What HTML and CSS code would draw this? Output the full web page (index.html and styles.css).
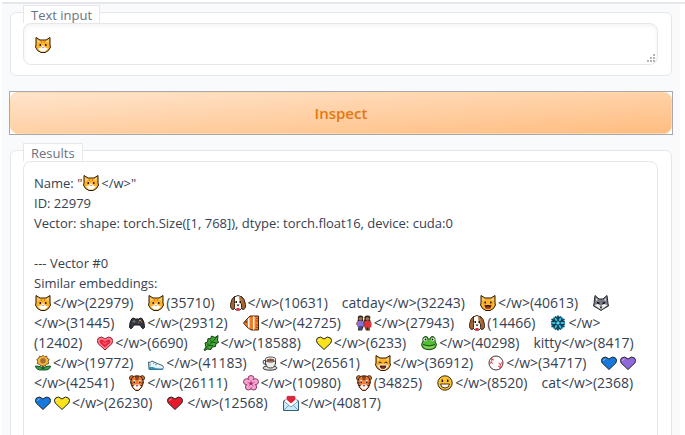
FILE: index.html
```html
<!DOCTYPE html>
<html lang="en">
<head>
<meta charset="utf-8">
<title>Embedding inspector</title>
<link rel="stylesheet" href="styles.css">
</head>
<body>
<svg class="sprite" aria-hidden="true">
  <symbol id="cat" viewBox="0 0 16 16"><path d="M1 .5 5 3h6L15 .5V8l.5 2-2 3.500L10 15.500H6L2.500 13.500.5 10 1 8z" fill="#fcb32b" stroke="#2a1a08"/><path d="M2.500 3v3L5 4.500zM13.500 3v3L11 4.500z" fill="#f8d9a0"/><path d="M6.500 3.500V6M9.500 3.500V6" stroke="#d9801a"/><path d="M8 8 6 10.500l-3 1L6 14.500h4l3-3-3-1z" fill="#fff"/><path d="M4.500 7H6v2H4.500zM10 7h1.500v2H10z" fill="#3a2410"/><path d="M7 10h2l-1 1.500z" fill="#e0566f"/></symbol>
  <symbol id="grin-cat" viewBox="0 0 16 16"><path d="M1 .5 5 3h6L15 .5V8l.5 2-2 3.500L10 15.500H6L2.500 13.500.5 10 1 8z" fill="#fcb32b" stroke="#2a1a08"/><path d="M2.500 3v3L5 4.500zM13.500 3v3L11 4.500z" fill="#f8d9a0"/><path d="M5.200 6.500v2M10.800 6.500v2" stroke="#2a1a08" stroke-width="1.500"/><path d="M4.500 10h7q-.5 4-3.500 4t-3.500-4z" fill="#54200f"/><path d="M6 13q2-1.500 4 0-2 1.500-4 0z" fill="#ef4b5b"/></symbol>
  <symbol id="joy-cat" viewBox="0 0 16 16"><path d="M1 .5 5 3h6L15 .5V8l.5 2-2 3.500L10 15.500H6L2.500 13.500.5 10 1 8z" fill="#fcb32b" stroke="#2a1a08"/><path d="M2.500 3v3L5 4.500zM13.500 3v3L11 4.500z" fill="#f8d9a0"/><path d="M3.500 8q1.500-2 3 0M9.500 8q1.500-2 3 0" fill="none" stroke="#2a1a08"/><path d="M2.500 10.500 6 9.500h4l3.500 1-3 4h-5z" fill="#fff"/><path d="M4.500 10.500h7q-.5 3.500-3.500 3.500t-3.500-3.500z" fill="#54200f"/><path d="M6 13q2-1 4 0-2 1-4 0z" fill="#ef4b5b"/></symbol>
  <symbol id="dog" viewBox="0 0 16 16"><path d="M4 2q4-3 8 0l1 10-3 3H6l-3-3z" fill="#fff" stroke="#3a2b22"/><path d="M4.500 1.500Q1.500 3 .5 9.500q-.5 5 3 5 1.500-1 1-6zM11.500 1.500q3 1.500 4 8 .5 5-3 5-1.500-1-1-6z" fill="#a8642f" stroke="#3a2b22"/><path d="M9 1.500q4 0 3 6.500l-2 1z" fill="#b9783f"/><path d="M5.500 6h1.500v2H5.500zM9.500 6H11v2H9.500z" fill="#21170f"/><path d="M6.500 9.500h3L8 11.500z" fill="#241c1c"/><path d="M6.500 13h3v2.500h-3z" fill="#e9223b"/></symbol>
  <symbol id="wolf" viewBox="0 0 16 16"><path d="M2 .5 6 4h4l4-3.500 1 8 .5 2.500-4.500 2.500-3 2-3-2L.5 11 1 8.500z" fill="#777c85" stroke="#25272c"/><path d="M3 3v3l2-1zM13 3v3l-2-1z" fill="#d8d9dd"/><path d="M1.500 10 5 9l3 2 3-2 3.500 1-4 3L8 14.500 5.500 13z" fill="#f4f4f6"/><path d="m4 7.500 2.500 1M12 7.500l-2.500 1" stroke="#111" stroke-width="1.500"/><path d="M6.500 11.500h3L8 14z" fill="#17181b"/></symbol>
  <symbol id="gamepad" viewBox="0 0 16 16"><path d="M3 3.500 5 3l1 1h4l1-1 2 .5q2.500 3 2.500 9-1 2-2.500.5L11 10H5l-2 3Q1.500 14.500.5 12.500q0-6 2.500-9z" fill="#35383d" stroke="#17191c"/><path d="M3.500 6.500h3M5 5v3" stroke="#777"/><circle cx="11" cy="5.500" r=".8" fill="#e6d04d"/><circle cx="12.500" cy="7" r=".8" fill="#d84b4b"/><circle cx="9.500" cy="7.500" r=".7" fill="#777"/></symbol>
  <symbol id="fish" viewBox="0 0 16 16"><path d="M.5 8 4 4l3-3h8.500v14H8l-4-3z" fill="#f47b20" stroke="#4a2412"/><path d="m5 3.500 1.500-1v11L5 12zM10 1.500h1.500v13H10z" fill="#fff"/><path d="M13 3.500h2M13 6h2M13 10h2M13 12.500h2" stroke="#bb4c12"/><circle cx="3.200" cy="7" r=".8" fill="#111"/></symbol>
  <symbol id="couple" viewBox="0 0 16 16"><path d="M2 4Q1 .5 4.500.5T7 4l.5 3 1-3q-1-3.500 3-3.500T14 4l1.500 6-2 1 .5 4.500h-4L8 10.500l-2 5H2l.5-5-2-1z" fill="#352217"/><path d="M1 6h6l.5 5.500H1z" fill="#8b70db"/><path d="M8.500 6h6l1 6.500h-7z" fill="#e5303c"/><circle cx="4.500" cy="3.800" r="1.900" fill="#a3704a"/><circle cx="11.500" cy="3.800" r="1.900" fill="#a3704a"/><path d="M2.500 11h4L5.500 15h-2z" fill="#3c4e9b"/><path d="M10 12v3M13 12v3M.8 7v3M7.800 7v4M15 7v3" stroke="#a66c45"/></symbol>
  <symbol id="snow" viewBox="0 0 16 16"><circle cx="8" cy="8" r="7" fill="#39bfe3"/><path d="M8 .5v15M1.500 4.200l13 7.600M1.500 11.800l13-7.600" stroke="#10384c" stroke-width="1.500"/><path d="m5 1.500 3 2.500 3-2.500M5 14.500 8 12l3 2.500M1 7l3.500-1L4 2.500M15 7l-3.500-1 .5-3.500M1 9l3.500 1-.5 3.500M15 9l-3.500 1 .5 3.500" fill="none" stroke="#10384c" stroke-width="1.200"/><circle cx="8" cy="8" r="2.200" fill="#5cd4ee" stroke="#10384c"/></symbol>
  <symbol id="heart" viewBox="0 0 16 16"><path d="M8 14.500 1.200 8Q-.5 5 1.500 3q3-2.500 6.500 1 3.500-3.500 6.500-1 2 2 .3 5z" fill="currentColor" stroke="#242424"/><path d="M2.500 6q0-2 2-2" fill="none" stroke="#fff" stroke-opacity=".45"/></symbol>
  <symbol id="grow-heart" viewBox="0 0 16 16"><path d="M8 15 1 8.500Q-.5 5 1.500 3q3-2.500 6.500 1 3.500-3.500 6.500-1 2 2 .5 5.500z" fill="#ff8090" stroke="#8d1d2f"/><path d="M8 12.500 3 8Q2 5.500 3.500 4.500 6 4 8 6.500q2-2.500 4.500-2Q14 5.500 13 8z" fill="#e8243d"/><path d="M8 10 5 7.500l1-1 2 1.500 2-1.500 1 1z" fill="#f65064"/></symbol>
  <symbol id="leaf" viewBox="0 0 16 16"><path d="m1 15 2-3-1-4 2.500-1L5 3.500 7.500 4 8.500 1 12 2.500l3-2L14.500 5l1 2.500-2.500 1-.5 3-3.500.5-1 2.500-4-.5L2 15.500z" fill="#43a82f" stroke="#163d18"/><path d="M1.500 15 13.500 2.500M5 11V8M8 8V5M6 10.500h4M9 7.500h4" fill="none" stroke="#185f20"/></symbol>
  <symbol id="frog" viewBox="0 0 16 16"><path d="M2 6q-1-4 2-4.500T7 4h2q.5-3 3-2.500T14 6q3 4 0 7-6 3.500-12 0-3-3 0-7z" fill="#55bd35" stroke="#174c18"/><circle cx="4.200" cy="4.500" r="1.800" fill="#fff"/><circle cx="11.800" cy="4.500" r="1.800" fill="#fff"/><circle cx="4.500" cy="4.500" r="1" fill="#111"/><circle cx="11.500" cy="4.500" r="1" fill="#111"/><path d="M2 10q6 3 12 0-1 3.500-6 3.500T2 10z" fill="#8bd455"/><path d="M2 9.500q6 3 12 0" fill="none" stroke="#174c18"/></symbol>
  <symbol id="sunflower" viewBox="0 0 16 16"><path d="M8 9v6" stroke="#246b2d" stroke-width="2"/><path d="M7.500 15Q1 15.500.5 11 6 10.500 8 14q2-3.500 7.500-3-.5 4.500-7 4z" fill="#36a344" stroke="#14512a"/><path d="m8 .3 1.500 1.400 2.200-.5.500 2.200 2 1-1 2 .5 2.200-2.200.6L10 11H6L4.500 9.200 2.300 8.600l.5-2.200-1-2 2-1 .5-2.200 2.200.5z" fill="#f9bd32" stroke="#78502a"/><circle cx="8" cy="5.800" r="2.800" fill="#a66c3d"/></symbol>
  <symbol id="shoe" viewBox="0 0 16 16"><path d="M.5 7q2 1 3.500-1l6.500 3 4 1.500 1 2-1 2H1z" fill="#e5f3fa" stroke="#43606d"/><path d="M1 12h4q3 2 10 1.500v1H1z" fill="#2d91bb"/><path d="m5 8.500 2-1M7 10l2-1M2 8.500v3" stroke="#7398a9"/></symbol>
  <symbol id="coffee" viewBox="0 0 16 16"><ellipse cx="8" cy="13" rx="7" ry="2.200" fill="#dedede" stroke="#333"/><path d="M3.500 5.500Q1 4.500 1 7t3.500 2.500M3.500 4h10v4q-.5 5-5 5t-5-5z" fill="#ededed" stroke="#3d3d3d"/><ellipse cx="8.500" cy="4.500" rx="5" ry="2.500" fill="#fff" stroke="#444"/><ellipse cx="8.500" cy="5" rx="3.700" ry="1.500" fill="#8a5434"/></symbol>
  <symbol id="ball" viewBox="0 0 16 16"><circle cx="8" cy="8" r="7" fill="#fff" stroke="#433"/><path d="M4 2q1 5-3 8M12 14q-1-5 3-8" fill="none" stroke="#e14450"/><path d="m3 4 3 1M2.500 7 5 8.500M10.500 8l3 2M10 11l3 1.500" stroke="#e14450"/></symbol>
  <symbol id="tiger" viewBox="0 0 16 16"><circle cx="2.800" cy="3" r="2.300" fill="#ef8b3a" stroke="#3b1d12"/><circle cx="13.200" cy="3" r="2.300" fill="#ef8b3a" stroke="#3b1d12"/><path d="M3 2.500Q8-1 13 2.500l1.500 5-2 5-3 3h-3l-3-3-2-5z" fill="#f07a30" stroke="#3b1d12"/><path d="M3.800 5.500 6 5l.5 3zM12.200 5.500 10 5l-.5 3zM6 9.500h4l2 2-2.500 3h-3l-2.500-3z" fill="#fff"/><path d="M6 2h4M6.500 4h3M1.800 7.500l1.700.7M14.200 7.500l-1.700.7M3 10.500l1.500.2M13 10.500l-1.500.2" stroke="#26150f"/><path d="M4.700 6.500h1.300v1.500H4.700zM10 6.500h1.300v1.500H10z" fill="#26150f"/><path d="M6.500 10h3L8 12z" fill="#b94552"/></symbol>
  <symbol id="blossom" viewBox="0 0 16 16"><g fill="#f6a3cf" stroke="#8f376a"><ellipse cx="8" cy="3.700" rx="3" ry="3.200"/><ellipse cx="12.300" cy="6.700" rx="3.200" ry="3"/><ellipse cx="10.600" cy="12" rx="3" ry="3"/><ellipse cx="5.400" cy="12" rx="3" ry="3"/><ellipse cx="3.700" cy="6.700" rx="3.200" ry="3"/></g><circle cx="8" cy="8.500" r="4" fill="#f6a3cf"/><path d="M8 5v3.500l3.500-1M8 8.500l2.500 3M8 8.500l-2.500 3M8 8.500l-3.500-1" fill="none" stroke="#d65aa0"/><circle cx="8" cy="8.500" r="1.500" fill="#a82d73"/></symbol>
  <symbol id="smile" viewBox="0 0 16 16"><circle cx="8" cy="8" r="7.200" fill="#fbc332" stroke="#3b2b12"/><path d="M5.300 4.500v2.500M10.700 4.500v2.500" stroke="#2a1a08" stroke-width="1.500"/><path d="M3.500 9h9q-.5 4-4.500 4T3.500 9z" fill="#fff" stroke="#543318"/></symbol>
  <symbol id="letter" viewBox="0 0 16 16"><path d="M.5 6 8 1l7.500 5v9.500H.5z" fill="#cceaf7" stroke="#305f7b"/><path d="M2.500 3h11v6L8 12 2.500 9z" fill="#fff"/><path d="M8 8.500 3.500 4.500Q3 1 5.500.8 7 .8 8 2.200 9 .8 10.500.8 13 1 12.500 4.500z" fill="#df2638"/><path d="m.5 6 7.500 6 7.500-6M.5 15.500 6 10M15.500 15.500 10 10" fill="none" stroke="#70a6c0"/></symbol>
</svg>

<main class="app">
  <section class="panel">
    <label class="panel-label" for="query">Text input</label>
    <div class="field">
      <textarea class="query" id="query" rows="1"></textarea>
      <svg class="emoji field-emoji" role="img" aria-label="cat face"><use href="#cat"/></svg>
      <svg class="grip" viewBox="0 0 8 8" aria-hidden="true"><path d="M6 0h2v2H6zM3 3h2v2H3zM6 3h2v2H6zM0 6h2v2H0zM3 6h2v2H3zM6 6h2v2H6z"/></svg>
    </div>
  </section>

  <div class="action"><button class="inspect" type="button">Inspect</button></div>

  <section class="panel results">
    <h2 class="panel-label">Results</h2>
    <div class="output">
      <p>Name: "<svg class="emoji"><use href="#cat"/></svg>&lt;/w&gt;"</p>
      <p>ID: 22979</p>
      <p>Vector: shape: torch.Size([1, 768]), dtype: torch.float16, device: cuda:0</p>
      <p class="gap">--- Vector #0</p>
      <p>Similar embeddings:</p>
      <p class="matches">
        <span><svg class="emoji"><use href="#cat"/></svg>&lt;/w&gt;(22979)</span><span><svg class="emoji"><use href="#cat"/></svg>(35710)</span><span><svg class="emoji"><use href="#dog"/></svg>&lt;/w&gt;(10631)</span><span>catday&lt;/w&gt;(32243)</span><span><svg class="emoji"><use href="#grin-cat"/></svg>&lt;/w&gt;(40613)</span><span><svg class="emoji"><use href="#wolf"/></svg><br>&lt;/w&gt;(31445)</span><span><svg class="emoji"><use href="#gamepad"/></svg>&lt;/w&gt;(29312)</span><span><svg class="emoji"><use href="#fish"/></svg>&lt;/w&gt;(42725)</span><span><svg class="emoji"><use href="#couple"/></svg>&lt;/w&gt;(27943)</span><span><svg class="emoji"><use href="#dog"/></svg>(14466)</span><span><svg class="emoji"><use href="#snow"/></svg>&lt;/w&gt;<br>(12402)</span><span><svg class="emoji"><use href="#grow-heart"/></svg>&lt;/w&gt;(6690)</span><span><svg class="emoji"><use href="#leaf"/></svg>&lt;/w&gt;(18588)</span><span><svg class="emoji yellow"><use href="#heart"/></svg>&lt;/w&gt;(6233)</span><span><svg class="emoji"><use href="#frog"/></svg>&lt;/w&gt;(40298)</span><span>kitty&lt;/w&gt;(8417)</span><br>
        <span><svg class="emoji"><use href="#sunflower"/></svg>&lt;/w&gt;(19772)</span><span><svg class="emoji"><use href="#shoe"/></svg>&lt;/w&gt;(41183)</span><span><svg class="emoji"><use href="#coffee"/></svg>&lt;/w&gt;(26561)</span><span><svg class="emoji"><use href="#joy-cat"/></svg>&lt;/w&gt;(36912)</span><span><svg class="emoji"><use href="#ball"/></svg>&lt;/w&gt;(34717)</span><span><svg class="emoji blue"><use href="#heart"/></svg><svg class="emoji purple"><use href="#heart"/></svg><br>&lt;/w&gt;(42541)</span><span><svg class="emoji"><use href="#tiger"/></svg>&lt;/w&gt;(26111)</span><span><svg class="emoji"><use href="#blossom"/></svg>&lt;/w&gt;(10980)</span><span><svg class="emoji"><use href="#tiger"/></svg>(34825)</span><span><svg class="emoji"><use href="#smile"/></svg>&lt;/w&gt;(8520)</span><span>cat&lt;/w&gt;(2368)</span><br>
        <span><svg class="emoji blue"><use href="#heart"/></svg><svg class="emoji yellow"><use href="#heart"/></svg>&lt;/w&gt;(26230)</span><span><svg class="emoji red wide"><use href="#heart"/></svg>&lt;/w&gt;(12568)</span><span><svg class="emoji"><use href="#letter"/></svg>&lt;/w&gt;(40817)</span>
      </p>
    </div>
  </section>
</main>
</body>
</html>
```

FILE: styles.css
```css
* {
  box-sizing: border-box;
}

html {
  overflow: hidden;
}

body {
  margin: 0;
  padding: 2px 0 0 2px;
  background: #fff;
  color: #374151;
  font: 13px/20px "Open Sans", "Noto Sans", sans-serif;
}

.sprite {
  position: absolute;
  width: 0;
  height: 0;
}

.app {
  display: flex;
  flex-direction: column;
  gap: 15px;
  min-height: calc(100vh + 24px);
  padding: 8px 13px 0 8px;
  border-top: 2px solid #e5e7eb;
  background: linear-gradient(#f9fafb, #f9fafb) left / calc(100% - 5px) 100% no-repeat;
}

.panel {
  padding: 0 13px 10px 12px;
  border: 1px solid #e5e7eb;
  border-radius: 6px;
  background: #fff;
}

.panel-label {
  display: block;
  width: fit-content;
  height: 18px;
  margin: -8px 0 0;
  padding: 0 7px;
  border: 1px solid #e5e7eb;
  border-bottom: 0;
  background: #fff;
  color: #6b7280;
  font-size: 13px;
  font-weight: 400;
  line-height: 19px;
}

.field {
  position: relative;
}

.query {
  display: block;
  width: 100%;
  height: 42px;
  padding: 10px;
  border: 1px solid #e5e7eb;
  border-radius: 8px;
  background: #fff;
  box-shadow: inset 0 2px 4px rgba(0, 0, 0, 0.05);
  color: inherit;
  font: inherit;
  resize: none;
}

.emoji {
  width: 16px;
  height: 16px;
  margin: 0 2px 0 1px;
  vertical-align: -3px;
}

.wide {
  margin-right: 4px;
}

.field-emoji {
  position: absolute;
  top: 14px;
  left: 11px;
}

.grip {
  position: absolute;
  right: 3px;
  bottom: 3px;
  width: 8px;
  height: 8px;
  fill: #b5b5b5;
}

.action {
  margin: 0 -1px;
  border: 1px solid #a7a9ae;
  background: #fff;
}

.inspect {
  display: block;
  width: 100%;
  height: 42px;
  border: 1px solid #fed7aa;
  border-radius: 8px;
  background: linear-gradient(to bottom right, #ffe4cc, #ffbd80);
  color: #e5770e;
  font: 600 15px/24px "Open Sans", "Noto Sans", sans-serif;
}

.results {
  flex: 1;
  display: flex;
  flex-direction: column;
}

.output {
  flex: 1;
  padding: 11px 10px;
  border: 1px solid #e5e7eb;
  border-radius: 8px;
  white-space: nowrap;
}

.output p {
  margin: 0;
}

.output .gap {
  margin-top: 20px;
}

.matches {
  font-size: 14px;
}

.matches span {
  margin-right: 14px;
}

.yellow {
  color: #fce11d;
}

.blue {
  color: #1679db;
}

.purple {
  color: #9068dc;
}

.red {
  color: #e51b2c;
}
```
